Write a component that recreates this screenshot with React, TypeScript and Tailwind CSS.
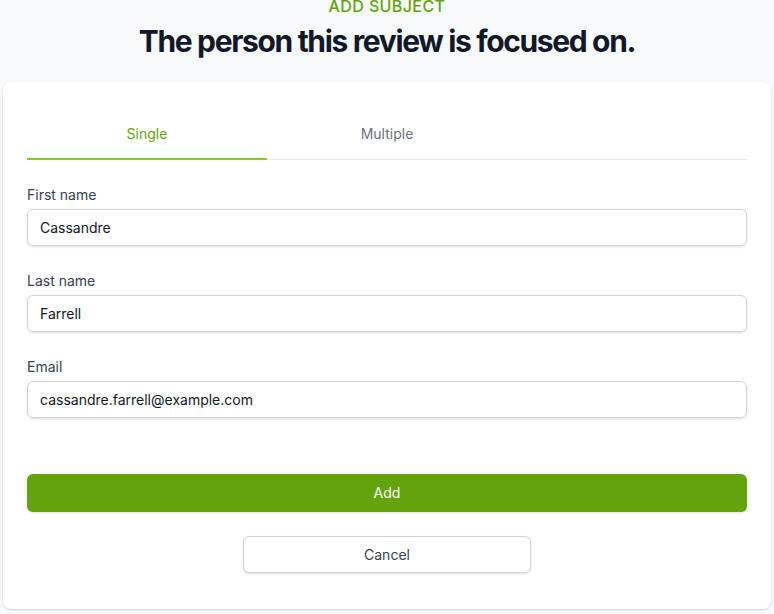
const fields = [
  { label: 'First name', value: 'Cassandre' },
  { label: 'Last name', value: 'Farrell' },
  { label: 'Email', value: 'cassandre.farrell@example.com' },
];

export default function App() {
  return (
    <div className="min-h-screen bg-[#f8f9fb] px-[3px] pb-1 font-['Inter',sans-serif] overflow-hidden">
      <div className="-mt-[6px] text-center">
        <p className="text-base font-medium uppercase leading-6 tracking-wide text-[#65a30d]">Add subject</p>
        <h1 className="mt-[5px] text-3xl font-bold tracking-[-0.045em] text-[#111827]">
          The person this review is focused on.
        </h1>
      </div>

      <div className="mt-[23px] rounded-lg bg-white p-6 shadow-[0_1px_3px_rgba(0,0,0,0.1),0_1px_2px_rgba(0,0,0,0.06)]">
        <div className="flex border-b border-[#e5e7eb]">
          <button className="-mb-px w-1/3 border-b-2 border-[#84cc16] pt-[18px] pb-[14px] text-sm font-normal text-[#65a30d]">
            Single
          </button>
          <button className="-mb-px w-1/3 border-b-2 border-transparent pt-[18px] pb-[14px] text-sm font-normal text-[#6b7280]">
            Multiple
          </button>
        </div>

        <div className="mt-[25px] flex flex-col gap-[25px]">
          {fields.map((f) => (
            <div key={f.label}>
              <label className="block text-sm font-normal text-[#374151]">{f.label}</label>
              <input
                className="mt-[4px] block h-[37px] w-full rounded-md border border-[#d1d5db] px-3 text-sm text-[#111827] shadow-sm outline-none"
                defaultValue={f.value}
                type="text"
              />
            </div>
          ))}
        </div>

        <button className="mt-[56px] flex h-[38px] w-full items-center justify-center rounded-md bg-[#65a30d] text-sm font-normal text-white shadow-sm">
          Add
        </button>
        <div className="mt-[24px] flex justify-center">
          <button className="h-[37px] w-72 rounded-md border border-[#d1d5db] bg-white text-sm font-normal text-[#374151] shadow-sm">
            Cancel
          </button>
        </div>
        <div className="h-3" />
      </div>
    </div>
  );
}
